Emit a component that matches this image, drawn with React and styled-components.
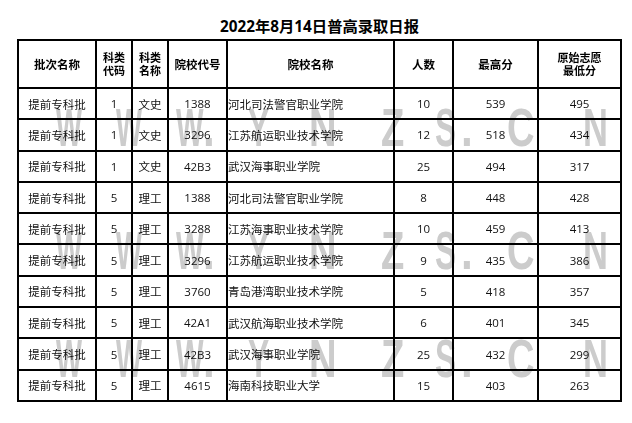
import React from "react";
import styled, { createGlobalStyle } from "styled-components";

const Global = createGlobalStyle`
  html, body { margin: 0; padding: 0; background: #fff; }
  body { font-family: "Open Sans", "Noto Sans CJK SC", sans-serif; }
`;

const Page = styled.div`
  padding: 16px 0 0 17px;
`;

const Sheet = styled.div`
  display: flex;
  flex-direction: column;
  width: fit-content;
`;

const Title = styled.h1`
  margin: 0 0 3px;
  height: 20px;
  font-size: 15.3px;
  line-height: 20px;
  font-weight: 700;
  text-align: center;
  color: #000;
  font-family: "Open Sans", "Noto Sans CJK SC", sans-serif;
`;

const TableWrap = styled.div`
  position: relative;
  isolation: isolate;
`;

const Grid = styled.div`
  display: grid;
  grid-template-columns: 76px 34px 34px 57px 165px 57px 83px 81px;
  grid-template-rows: 46px repeat(10, 29.3px);
  gap: 2px;
  padding: 2px;
  background: #000;
  width: fit-content;
`;

const HeadCell = styled.div`
  background: #fff;
  display: flex;
  align-items: center;
  justify-content: center;
  text-align: center;
  font-weight: 700;
  font-size: ${(p) => (p.$multi ? "11px" : "11.5px")};
  line-height: 13px;
  color: #000;
  font-family: "Noto Sans CJK SC", sans-serif;
`;

const Cell = styled.div`
  background: #fff;
  display: flex;
  align-items: center;
  justify-content: ${(p) => (p.$left ? "flex-start" : "center")};
  font-size: 11.5px;
  color: #111;
  white-space: nowrap;
  font-family: "Open Sans", "Noto Sans CJK SC", sans-serif;
`;

const Watermark = styled.div`
  position: absolute;
  inset: 0;
  pointer-events: none;
  mix-blend-mode: multiply;
`;

const Mark = styled.span`
  position: absolute;
  left: ${(p) => p.$x}px;
  top: ${(p) => p.$y}px;
  font-family: "Liberation Sans", Arial, sans-serif;
  font-weight: 700;
  font-size: 53px;
  line-height: 53px;
  color: #cccccc;
  transform: scaleX(${(p) => p.$sx});
  transform-origin: left top;
`;

const headers = [
  ["批次名称"],
  ["科类", "代码"],
  ["科类", "名称"],
  ["院校代号"],
  ["院校名称"],
  ["人数"],
  ["最高分"],
  ["原始志愿", "最低分"],
];

const rows = [
  ["提前专科批", "1", "文史", "1388", "河北司法警官职业学院", "10", "539", "495"],
  ["提前专科批", "1", "文史", "3296", "江苏航运职业技术学院", "12", "518", "434"],
  ["提前专科批", "1", "文史", "42B3", "武汉海事职业学院", "25", "494", "317"],
  ["提前专科批", "5", "理工", "1388", "河北司法警官职业学院", "8", "448", "428"],
  ["提前专科批", "5", "理工", "3288", "江苏海事职业技术学院", "10", "459", "413"],
  ["提前专科批", "5", "理工", "3296", "江苏航运职业技术学院", "9", "435", "386"],
  ["提前专科批", "5", "理工", "3760", "青岛港湾职业技术学院", "5", "418", "357"],
  ["提前专科批", "5", "理工", "42A1", "武汉航海职业技术学院", "6", "401", "345"],
  ["提前专科批", "5", "理工", "42B3", "武汉海事职业学院", "25", "432", "299"],
  ["提前专科批", "5", "理工", "4615", "海南科技职业大学", "15", "403", "263"],
];

// watermark letters: char, page x of glyph left, scaleX
const letters = [
  ["W", 56, 0.52],
  ["W", 116, 0.52],
  ["W", 176, 0.55],
  [".", 203, 0.8],
  ["Y", 248, 0.6],
  ["N", 309, 0.72],
  ["Z", 381, 0.72],
  ["S", 435, 0.6],
  [".", 461, 0.8],
  ["C", 507, 0.72],
  ["N", 583, 0.65],
];
const lineTops = [108, 231, 339];

export default function App() {
  return (
    <>
      <Global />
      <Page>
        <Sheet>
          <Title>2022年8月14日普高录取日报</Title>
          <TableWrap>
            <Grid>
              {headers.map((h, i) => (
                <HeadCell key={"h" + i} $multi={h.length > 1}>
                  <div>
                    {h.map((l, j) => (
                      <div key={j}>{l}</div>
                    ))}
                  </div>
                </HeadCell>
              ))}
              {rows.map((r, ri) =>
                r.map((c, ci) => (
                  <Cell key={ri + "-" + ci} $left={ci === 4}>
                    {c}
                  </Cell>
                ))
              )}
            </Grid>
            <Watermark>
              {lineTops.map((t, li) =>
                letters.map(([ch, x, sx], i) => (
                  <Mark key={li + "-" + i} $x={x - 17} $y={t - 39 - 7} $sx={sx}>
                    {ch}
                  </Mark>
                ))
              )}
            </Watermark>
          </TableWrap>
        </Sheet>
      </Page>
    </>
  );
}
